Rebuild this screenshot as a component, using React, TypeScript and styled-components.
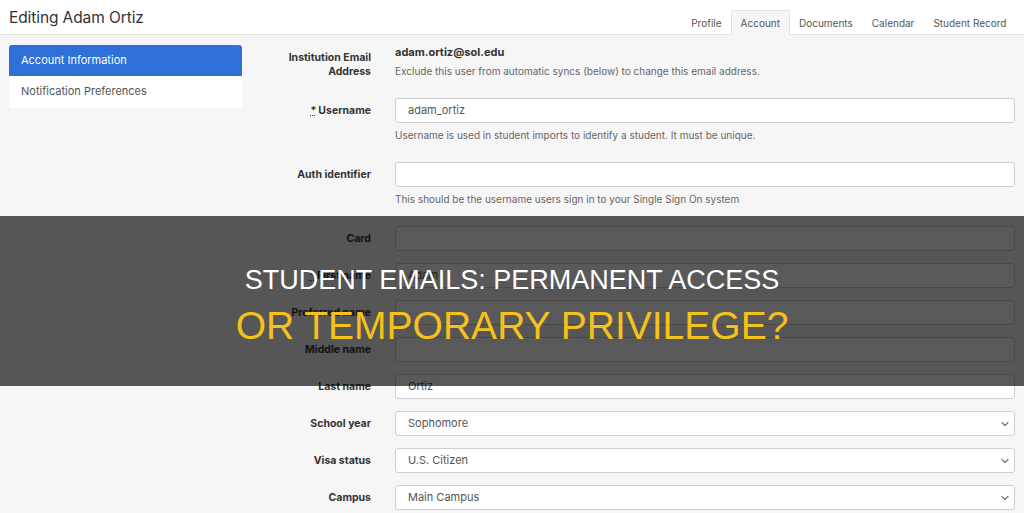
import React from "react";
import styled, { createGlobalStyle } from "styled-components";

const GlobalStyle = createGlobalStyle`
  html, body {
    margin: 0;
    padding: 0;
    background: #f6f6f6;
    font-family: Inter, "Noto Sans", "Liberation Sans", sans-serif;
    color: #333;
  }
`;

type Field = {
  label: string;
  value?: string;
  help?: string;
  required?: boolean;
  select?: boolean;
};

const fields: Field[] = [
  {
    label: "Username",
    value: "adam_ortiz",
    required: true,
    help: "Username is used in student imports to identify a student. It must be unique.",
  },
  {
    label: "Auth identifier",
    help: "This should be the username users sign in to your Single Sign On system",
  },
  { label: "Card" },
  { label: "First name", value: "Adam", required: true },
  { label: "Preferred name" },
  { label: "Middle name" },
  { label: "Last name", value: "Ortiz" },
  { label: "School year", value: "Sophomore", select: true },
  { label: "Visa status", value: "U.S. Citizen", select: true },
  { label: "Campus", value: "Main Campus", select: true },
];

const tabs = ["Profile", "Account", "Documents", "Calendar", "Student Record"];

const Chevron = () => (
  <svg width="10" height="10" viewBox="0 0 10 10" fill="none">
    <path d="M2 3.5 L5 6.5 L8 3.5" stroke="#777" strokeWidth="1.2" strokeLinecap="round" strokeLinejoin="round" />
  </svg>
);

export default function App() {
  return (
    <Page>
      <GlobalStyle />
      <Header>
        <Title>Editing Adam Ortiz</Title>
        <Tabs>
          {tabs.map((t) => (
            <Tab key={t} active={t === "Account"}>
              {t}
            </Tab>
          ))}
        </Tabs>
      </Header>

      <Main>
        <Sidebar>
          <NavItem active>Account Information</NavItem>
          <NavItem>Notification Preferences</NavItem>
        </Sidebar>

        <Form>
          <Row>
            <Label offset={6}>
              Institution Email
              <br />
              Address
            </Label>
            <Control>
              <StaticValue>adam.ortiz@sol.edu</StaticValue>
              <Help>Exclude this user from automatic syncs (below) to change this email address.</Help>
            </Control>
          </Row>

          {fields.map((f) => (
            <Row key={f.label}>
              <Label>
                {f.required && <Req>*</Req>}
                {f.label}
              </Label>
              <Control>
                <Input>
                  {f.value}
                  {f.select && (
                    <Arrow>
                      <Chevron />
                    </Arrow>
                  )}
                </Input>
                {f.help && <Help>{f.help}</Help>}
              </Control>
            </Row>
          ))}
        </Form>
      </Main>

      <Banner>
        <BannerLine>STUDENT EMAILS: PERMANENT ACCESS</BannerLine>
        <BannerLine accent>OR TEMPORARY PRIVILEGE?</BannerLine>
      </Banner>
    </Page>
  );
}

const Page = styled.div`
  position: relative;
  width: 1024px;
  height: 513px;
  overflow: hidden;
  background: #f6f6f6;
`;

const Header = styled.div`
  height: 35px;
  background: #fff;
  border-bottom: 1px solid #e2e2e2;
  display: flex;
  align-items: flex-end;
  justify-content: space-between;
  padding: 0 8px 0 9px;
  box-sizing: border-box;
`;

const Title = styled.h1`
  margin: 0;
  align-self: center;
  font-size: 15.5px;
  font-weight: 400;
  color: #333;
  letter-spacing: -0.1px;
`;

const Tabs = styled.div`
  display: flex;
  align-items: flex-end;
  margin-bottom: -1px;
`;

const Tab = styled.div<{ active?: boolean }>`
  height: 25px;
  line-height: 24px;
  padding: 0 8.5px;
  font-size: 10px;
  color: #555;
  box-sizing: border-box;
  border: 1px solid ${(p) => (p.active ? "#e2e2e2" : "transparent")};
  border-bottom-color: ${(p) => (p.active ? "#f6f6f6" : "transparent")};
  background: ${(p) => (p.active ? "#f6f6f6" : "transparent")};
  border-radius: 2px 2px 0 0;
`;

const Main = styled.div`
  display: flex;
  padding: 10px 9px 0 9px;
`;

const Sidebar = styled.div`
  width: 233px;
  flex-shrink: 0;
  align-self: flex-start;
  background: #fff;
  border-radius: 3px;
  overflow: hidden;
`;

const NavItem = styled.div<{ active?: boolean }>`
  height: 31px;
  line-height: 31px;
  padding: 0 12px;
  font-size: 11px;
  color: ${(p) => (p.active ? "#fff" : "#555")};
  background: ${(p) => (p.active ? "#2f6fd8" : "#fff")};
  & + & {
    height: 32px;
    line-height: 30px;
  }
`;

const Form = styled.div`
  flex: 1;
  display: flex;
  flex-direction: column;
  gap: 12px;
`;

const Row = styled.div`
  display: grid;
  grid-template-columns: 129px 1fr;
  column-gap: 24px;
`;

const Label = styled.div<{ offset?: number }>`
  text-align: right;
  font-size: 10.5px;
  font-weight: 700;
  color: #333;
  line-height: ${(p) => (p.offset ? "14px" : "25px")};
  padding-top: ${(p) => p.offset ?? 0}px;
`;

const Req = styled.span`
  text-decoration: underline dotted;
  margin-right: 2px;
`;

const Control = styled.div`
  display: flex;
  flex-direction: column;
`;

const StaticValue = styled.div`
  font-size: 11px;
  font-weight: 700;
  line-height: 14px;
  color: #333;
`;

const Help = styled.div`
  font-size: 10px;
  line-height: 14px;
  color: #666;
  margin: 5px 0 8px;
`;

const Input = styled.div`
  position: relative;
  height: 25px;
  box-sizing: border-box;
  background: #fff;
  border: 1px solid #cfcfcf;
  border-radius: 3px;
  padding: 0 12px;
  font-size: 11px;
  line-height: 23px;
  color: #555;
`;

const Arrow = styled.span`
  position: absolute;
  right: 4px;
  top: 7px;
  display: flex;
`;

const Banner = styled.div`
  position: absolute;
  left: 0;
  right: 0;
  top: 216px;
  height: 170px;
  box-sizing: border-box;
  padding-top: 10px;
  background: rgba(0, 0, 0, 0.65);
  display: flex;
  flex-direction: column;
  align-items: center;
  justify-content: center;
  gap: 8px;
  font-family: "Liberation Sans", Arial, sans-serif;
`;

const BannerLine = styled.div<{ accent?: boolean }>`
  font-size: ${(p) => (p.accent ? "39px" : "27px")};
  line-height: ${(p) => (p.accent ? "44px" : "32px")};
  color: ${(p) => (p.accent ? "#f5c21b" : "#fff")};
  white-space: nowrap;
`;
